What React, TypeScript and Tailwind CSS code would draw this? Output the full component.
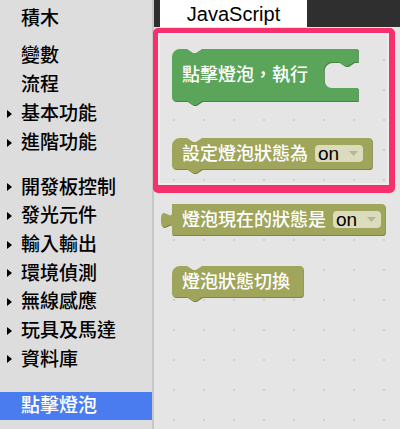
import React from "react";

const FONT = "font-['Liberation_Sans','Noto_Sans_CJK_TC',sans-serif]";

function Tri() {
  return (
    <div className="w-[21px] flex items-center pl-[7px]">
      <div className="w-0 h-0 border-l-[5px] border-l-black border-y-[4px] border-y-transparent" />
    </div>
  );
}

function Row({ label, arrow, h }: { label: string; arrow?: boolean; h: string }) {
  return (
    <div className={`flex items-center ${h}`}>
      {arrow ? <Tri /> : <div className="w-[21px]" />}
      <span className="text-[19px] leading-none text-black font-medium">{label}</span>
    </div>
  );
}

function Dropdown() {
  return (
    <div className="w-[48px] h-[17px] rounded-[4px] bg-[#dadcbd] flex items-center pl-[3px] shrink-0">
      <span className="text-[19px] leading-none text-black font-['Liberation_Sans',sans-serif]">on</span>
      <svg width="9" height="5" viewBox="0 0 9 5" className="ml-[10px]">
        <path d="M0 0 H9 L4.5 5 Z" fill="#b4b795" />
      </svg>
    </div>
  );
}

const G = "#5ba55b";
const GD = "#478347";
const O = "#9fa55b";
const OD = "#7f8448";

function stmtPath(w: number, h: number) {
  return `M0,8 A8,8 0 0 1 8,0 H15 l6,4 3,0 6,-4 H${w - 3} a3,3 0 0 1 3,3 V${h - 3} a3,3 0 0 1 -3,3 H30 l-6,4 -3,0 -6,-4 H4 a4,4 0 0 1 -4,-4 Z`;
}

const greenPath = (() => {
  const w = 186;
  const cx = 152;
  return `M0,8 A8,8 0 0 1 8,0 H15 l6,4 3,0 6,-4 H${w} V13 H${cx + 30} l-6,4 -3,0 -6,-4 H${cx + 8} a8,8 0 0 0 -8,8 V31 a8,8 0 0 0 8,8 H${w} V52 H30 l-6,4 -3,0 -6,-4 H4 a4,4 0 0 1 -4,-4 Z`;
})();

function outPath(w: number, h: number) {
  return `M0,0 V8 c0,10.7 -11,-8.5 -11,8 s11,-2.7 11,8 V${h} H${w - 3} a3,3 0 0 0 3,-3 V3 a3,3 0 0 0 -3,-3 Z`;
}

export default function App() {
  return (
    <div className={`relative flex w-[400px] h-[429px] overflow-hidden ${FONT}`}>
      <aside className="w-[154px] h-full bg-[#dddddd] border-r-[2px] border-[#c8c8c8] flex flex-col shrink-0">
        <div className="h-[4px]" />
        <Row label="積木" h="h-[29px]" />
        <div className="h-[8px]" />
        <Row label="變數" h="h-[29px]" />
        <Row label="流程" h="h-[29px]" />
        <Row label="基本功能" arrow h="h-[29px]" />
        <Row label="進階功能" arrow h="h-[29px]" />
        <div className="h-[16px]" />
        <Row label="開發板控制" arrow h="h-[28.67px]" />
        <Row label="發光元件" arrow h="h-[28.67px]" />
        <Row label="輸入輸出" arrow h="h-[28.67px]" />
        <Row label="環境偵測" arrow h="h-[28.67px]" />
        <Row label="無線感應" arrow h="h-[28.67px]" />
        <Row label="玩具及馬達" arrow h="h-[28.67px]" />
        <Row label="資料庫" arrow h="h-[28.67px]" />
        <div className="h-[18.3px]" />
        <div className="h-[28px] bg-[#4a7cf0] flex items-center pl-[21px]">
          <span className="text-[19px] leading-none text-white font-medium">點擊燈泡</span>
        </div>
      </aside>

      <main className="flex-1 flex flex-col">
        <div className="h-[27px] bg-[#2f2f2f] pl-[6px] flex shrink-0">
          <div className="w-[147px] h-full bg-white flex items-center justify-center">
            <span className="text-[20px] leading-none text-black font-['Liberation_Sans',sans-serif] pt-[1px]">JavaScript</span>
          </div>
        </div>
        <div className="relative flex-1 bg-[#e5e5e5] bg-[radial-gradient(circle,#d0d0d0_1px,transparent_1.6px)] bg-[length:30px_30px] bg-[position:5px_18px]">
          <div className="absolute left-[18px] top-[22px] w-[186px] h-[52px]">
            <svg className="absolute left-0 top-0 overflow-visible" width="186" height="52">
              <path d={greenPath} fill={GD} transform="translate(0.8,1)" />
              <path d={greenPath} fill={G} />
            </svg>
            <div className="relative h-full flex items-center pl-[10px]">
              <span className="text-[18px] leading-none text-white font-medium">點擊燈泡，執行</span>
            </div>
          </div>

          <div className="absolute left-[18px] top-[111px] w-[200px] h-[31px]">
            <svg className="absolute left-0 top-0 overflow-visible" width="200" height="31">
              <path d={stmtPath(200, 31)} fill={OD} transform="translate(0.8,1)" />
              <path d={stmtPath(200, 31)} fill={O} />
            </svg>
            <div className="relative h-full flex items-center pl-[10px] gap-[7px]">
              <span className="text-[18px] leading-none text-white font-medium">設定燈泡狀態為</span>
              <Dropdown />
            </div>
          </div>

          <div className="absolute left-[18px] top-[177px] w-[213px] h-[31px]">
            <svg className="absolute left-0 top-0 overflow-visible" width="213" height="31">
              <path d={outPath(213, 31)} fill={OD} transform="translate(0.8,1)" />
              <path d={outPath(213, 31)} fill={O} />
            </svg>
            <div className="relative h-full flex items-center pl-[10px] gap-[7px]">
              <span className="text-[18px] leading-none text-white font-medium">燈泡現在的狀態是</span>
              <Dropdown />
            </div>
          </div>

          <div className="absolute left-[18px] top-[239px] w-[131px] h-[31px]">
            <svg className="absolute left-0 top-0 overflow-visible" width="131" height="31">
              <path d={stmtPath(131, 31)} fill={OD} transform="translate(0.8,1)" />
              <path d={stmtPath(131, 31)} fill={O} />
            </svg>
            <div className="relative h-full flex items-center pl-[10px]">
              <span className="text-[18px] leading-none text-white font-medium">燈泡狀態切換</span>
            </div>
          </div>
        </div>
      </main>

      <div className="absolute left-[153px] top-[28px] w-[242px] h-[165px] border-[#f5306c] border-t-[5px] border-l-[5px] border-r-[6px] border-b-[8px] rounded-[5px] shadow-[inset_0_0_0_2px_rgba(255,255,255,0.3)]" />
    </div>
  );
}
